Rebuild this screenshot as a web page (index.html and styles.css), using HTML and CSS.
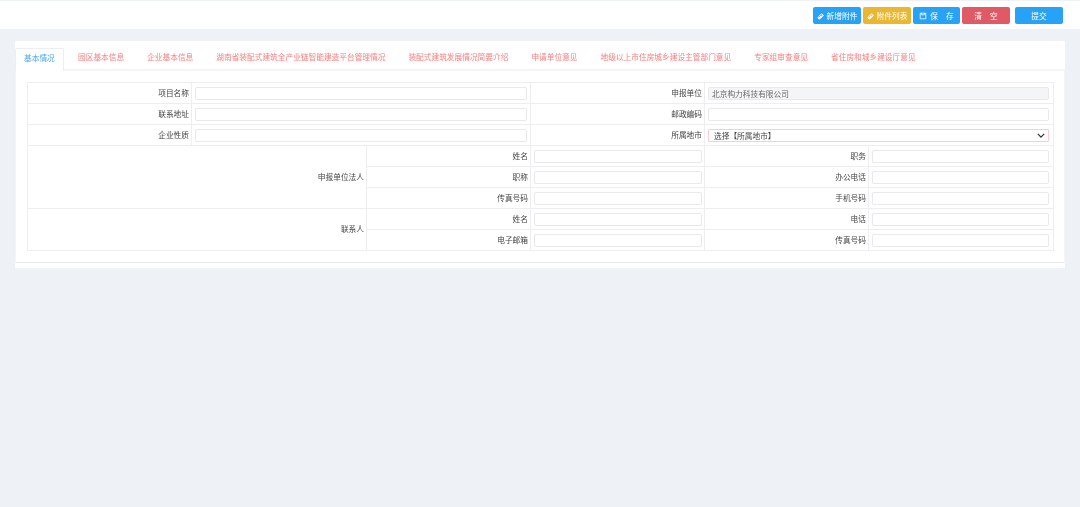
FILE: index.html
```html
<!DOCTYPE html>
<html lang="zh-CN">
<head>
<meta charset="utf-8">
<title>基本情况</title>
<link rel="stylesheet" href="styles.css">
</head>
<body>
<header class="toolbar">
  <button class="btn btn-blue"><svg class="ico" viewBox="0 0 10 10"><path d="M1.5 8.5 5.5 4.5M3 8.5l4-4a1.3 1.3 0 0 0-1.8-1.8L1.6 6.3a1.6 1.6 0 0 0 2.2 2.2L8.3 4" fill="none" stroke="#fff" stroke-width="1.2"/></svg>新增附件</button>
  <button class="btn btn-yellow"><svg class="ico" viewBox="0 0 10 10"><path d="M1.5 8.5 5.5 4.5M3 8.5l4-4a1.3 1.3 0 0 0-1.8-1.8L1.6 6.3a1.6 1.6 0 0 0 2.2 2.2L8.3 4" fill="none" stroke="#fff" stroke-width="1.2"/></svg>附件列表</button>
  <button class="btn btn-blue btn-save"><svg class="ico ico-save" viewBox="0 0 10 10"><path d="M1.5 1.5h7v7h-7zM3 1.5v2h4v-2" fill="none" stroke="#fff" stroke-width="1"/></svg>保<span class="space"></span>存</button>
  <button class="btn btn-red">清<span class="space"></span>空</button>
  <button class="btn btn-blue btn-last">提交</button>
</header>
<main class="card">
  <nav class="tabs">
    <a class="tab tab-active">基本情况</a>
    <a class="tab">园区基本信息</a>
    <a class="tab">企业基本信息</a>
    <a class="tab">湖南省装配式建筑全产业链智能建造平台管理情况</a>
    <a class="tab">装配式建筑发展情况简要介绍</a>
    <a class="tab">申请单位意见</a>
    <a class="tab">地级以上市住房城乡建设主管部门意见</a>
    <a class="tab">专家组审查意见</a>
    <a class="tab">省住房和城乡建设厅意见</a>
  </nav>
  <section class="panel">
    <table class="form">
      <colgroup>
        <col class="c1"><col class="c2"><col class="c3"><col class="c4"><col class="c5"><col class="c6">
      </colgroup>
      <tr>
        <th>项目名称</th>
        <td colspan="2"><input class="field"></td>
        <th>申报单位</th>
        <td colspan="2"><input class="field field-ro" value="北京构力科技有限公司" readonly></td>
      </tr>
      <tr>
        <th>联系地址</th>
        <td colspan="2"><input class="field"></td>
        <th>邮政编码</th>
        <td colspan="2"><input class="field"></td>
      </tr>
      <tr>
        <th>企业性质</th>
        <td colspan="2"><input class="field"></td>
        <th>所属地市</th>
        <td colspan="2">
          <div class="select-wrap">
            <select class="field field-select"><option>选择【所属地市】</option></select>
            <svg class="chevron" viewBox="0 0 10 6"><path d="M1 1l4 4 4-4" fill="none" stroke="#333" stroke-width="1.6"/></svg>
          </div>
        </td>
      </tr>
      <tr>
        <th colspan="2" rowspan="3">申报单位法人</th>
        <th>姓名</th>
        <td class="cell"><input class="field"></td>
        <th>职务</th>
        <td><input class="field"></td>
      </tr>
      <tr>
        <th>职称</th>
        <td class="cell"><input class="field"></td>
        <th>办公电话</th>
        <td><input class="field"></td>
      </tr>
      <tr>
        <th>传真号码</th>
        <td class="cell"><input class="field"></td>
        <th>手机号码</th>
        <td><input class="field"></td>
      </tr>
      <tr>
        <th colspan="2" rowspan="2">联系人</th>
        <th>姓名</th>
        <td class="cell"><input class="field"></td>
        <th>电话</th>
        <td><input class="field"></td>
      </tr>
      <tr>
        <th>电子邮箱</th>
        <td class="cell"><input class="field"></td>
        <th>传真号码</th>
        <td><input class="field"></td>
      </tr>
    </table>
  </section>
</main>
</body>
</html>
```

FILE: styles.css
```css
* { box-sizing: border-box; }
html, body { margin: 0; padding: 0; }
body {
  background: #eef1f6;
  height: 507px;
  overflow: hidden;
  font-family: "Noto Sans CJK SC", "Liberation Sans", sans-serif;
  font-size: 7.7px;
  color: #444;
  filter: blur(0.25px);
}
.toolbar {
  height: 28px;
  margin-top: 1px;
  background: #fff;
  display: flex;
  justify-content: flex-end;
  align-items: flex-start;
  gap: 2px;
  padding: 6px 17px 0 0;
}
.btn {
  width: 48px;
  height: 17px;
  border: 0;
  border-radius: 2px;
  padding: 0;
  display: flex;
  align-items: center;
  justify-content: center;
  font: inherit;
  color: #fff;
}
.btn-blue { background: #26a2f6; }
.btn-yellow { background: #e9b730; }
.btn-red { background: #e05a66; }
.btn-save { width: 47px; }
.btn-last { margin-left: 3px; }
.ico { width: 8px; height: 8px; margin-right: 2px; }
.ico-save { margin-right: 3px; }
.space { width: 8px; }
.card {
  margin: 12px 15px 0;
  background: #fff;
  height: 227px;
}
.tabs {
  height: 30px;
  display: flex;
  align-items: flex-end;
  border-bottom: 2px solid #f3f4f6;
}
.tab {
  height: 23px;
  margin-bottom: -2px;
  padding: 2px 11.5px 0;
  line-height: 14px;
  color: #fc7c7c;
  white-space: nowrap;
}
.tab-active {
  width: 49px;
  margin-right: 2.5px;
  padding: 2px 0 0 8px;
  color: #4aa8f5;
  background: #fff;
  border: 1px solid #eceef1;
  border-bottom: 0;
  border-radius: 2px 2px 0 0;
}
.panel {
  height: 192px;
  padding: 11px 12px 0;
  border-left: 1px solid #f3f4f6;
  border-right: 1px solid #f3f4f6;
  border-bottom: 1px solid #e9ebee;
}
.form {
  width: 1026px;
  margin-left: -1px;
  table-layout: fixed;
  border-collapse: collapse;
  background: #fff;
}
.c1 { width: 164px; }
.c2 { width: 175px; }
.c3 { width: 164px; }
.c4 { width: 174px; }
.c5 { width: 164px; }
.c6 { width: 185px; }
.form th, .form td {
  height: 21px;
  padding: 0;
  border: 1px solid #eceef0;
}
.form th {
  font-weight: 400;
  text-align: right;
  padding: 0 2px 2px 0;
  color: #444;
}
.form td { padding: 0 4px 0 3px; }
.form td.cell { padding-right: 2.5px; }
.form th + td[colspan] { padding-right: 3.5px; }
.form th + td[colspan]:last-child { padding-right: 4.5px; }
.field {
  display: block;
  width: 100%;
  height: 13px;
  padding: 0 5px;
  border: 1px solid #e8e9eb;
  border-radius: 2px;
  background: #fff;
  font: inherit;
  color: #444;
  outline: none;
}
.field-ro { background: #f4f5f6; color: #666; padding-left: 3px; }
.select-wrap { position: relative; }
.field-select {
  appearance: none;
  border-color: #f8cfcf;
  border-radius: 1px;
  color: #444;
}
.chevron {
  position: absolute;
  right: 4px;
  top: 4px;
  width: 8px;
  height: 5px;
}
```
